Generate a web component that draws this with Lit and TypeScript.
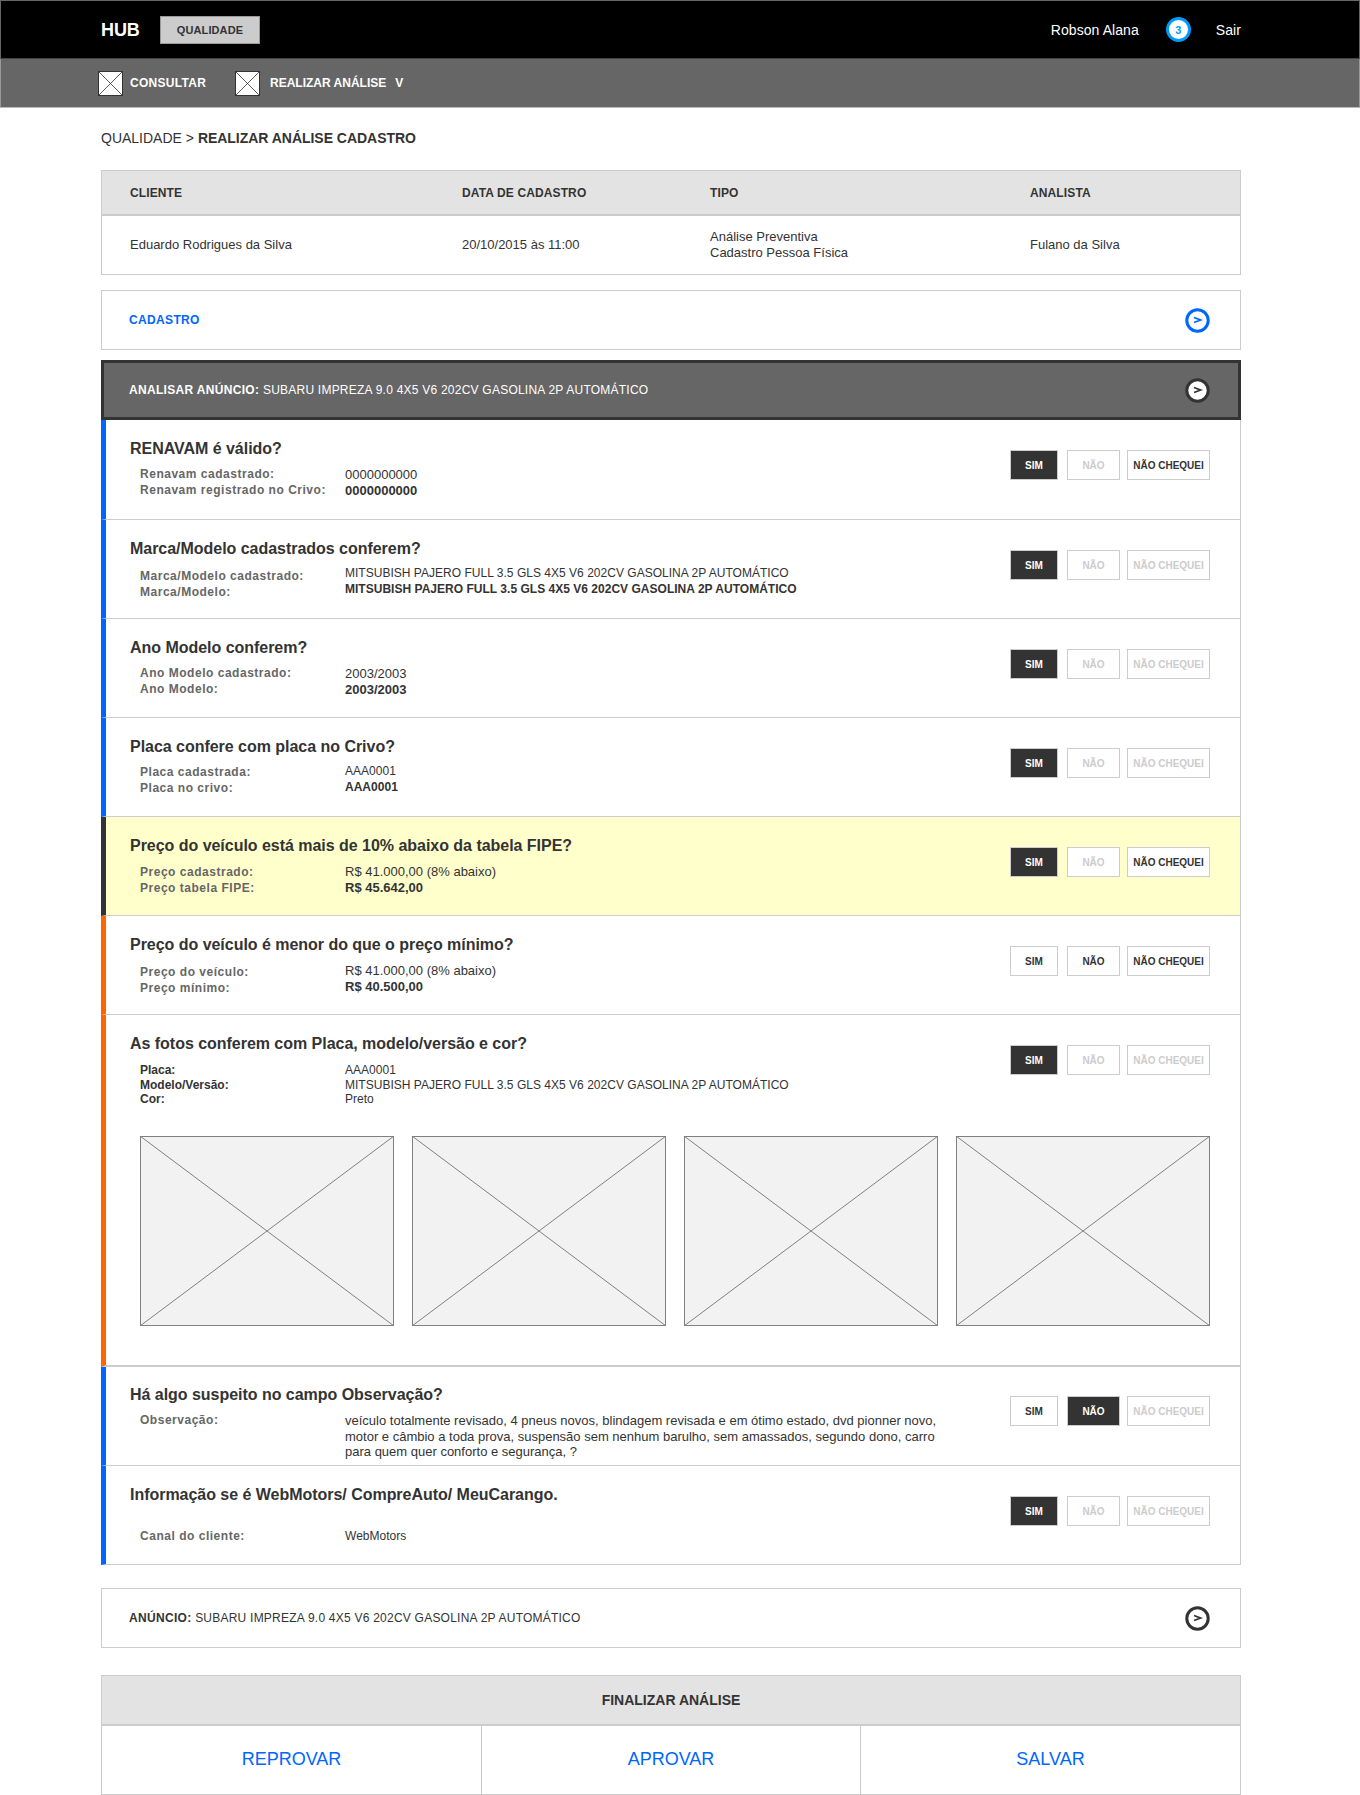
import { LitElement, html, css, svg } from "lit";
import { customElement } from "lit/decorators.js";

type B = "on" | "off" | "norm";
interface Detail { l: string; v: string; strong?: boolean; }
interface Q {
  title: string; bar: string; row?: string; btn: [B, B, B]; details: Detail[]; big?: boolean; photos?: boolean;
}

const PAJERO = "MITSUBISH PAJERO FULL 3.5 GLS 4X5 V6 202CV GASOLINA 2P AUTOMÁTICO";
const OBS = "veículo totalmente revisado, 4 pneus novos, blindagem revisada e em ótimo estado, dvd pionner novo, motor e câmbio a toda prova, suspensão sem nenhum barulho, sem amassados, segundo dono, carro para quem quer conforto e segurança, ?";

const QS: Q[] = [
  { title: "RENAVAM é válido?", bar: "blue", row: "first", big: true, btn: ["on", "off", "norm"], details: [
    { l: "Renavam cadastrado:", v: "0000000000" }, { l: "Renavam registrado no Crivo:", v: "0000000000", strong: true }] },
  { title: "Marca/Modelo cadastrados conferem?", bar: "blue", row: "low", btn: ["on", "off", "off"], details: [
    { l: "Marca/Modelo cadastrado:", v: PAJERO }, { l: "Marca/Modelo:", v: PAJERO, strong: true }] },
  { title: "Ano Modelo conferem?", bar: "blue", big: true, btn: ["on", "off", "off"], details: [
    { l: "Ano Modelo cadastrado:", v: "2003/2003" }, { l: "Ano Modelo:", v: "2003/2003", strong: true }] },
  { title: "Placa confere com placa no Crivo?", bar: "blue", row: "placa", btn: ["on", "off", "off"], details: [
    { l: "Placa cadastrada:", v: "AAA0001" }, { l: "Placa no crivo:", v: "AAA0001", strong: true }] },
  { title: "Preço do veículo está mais de 10% abaixo da tabela FIPE?", bar: "dark", row: "yellow", big: true, btn: ["on", "off", "norm"], details: [
    { l: "Preço cadastrado:", v: "R$ 41.000,00 (8% abaixo)" }, { l: "Preço tabela FIPE:", v: "R$ 45.642,00", strong: true }] },
  { title: "Preço do veículo é menor do que o preço mínimo?", bar: "orange", row: "shift2", big: true, btn: ["norm", "norm", "norm"], details: [
    { l: "Preço do veículo:", v: "R$ 41.000,00 (8% abaixo)" }, { l: "Preço mínimo:", v: "R$ 40.500,00", strong: true }] },
  { title: "As fotos conferem com Placa, modelo/versão e cor?", bar: "orange", row: "fotos", photos: true, btn: ["on", "off", "off"], details: [
    { l: "Placa:", v: "AAA0001" }, { l: "Modelo/Versão:", v: PAJERO }, { l: "Cor:", v: "Preto" }] },
  { title: "Há algo suspeito no campo Observação?", bar: "blue", row: "obs", big: true, btn: ["norm", "on", "off"], details: [
    { l: "Observação:", v: OBS }] },
  { title: "Informação se é WebMotors/ CompreAuto/ MeuCarango.", bar: "blue", row: "canal", btn: ["on", "off", "off"], details: [
    { l: "Canal do cliente:", v: "WebMotors" }] },
];

@customElement("app-root")
export class AppRoot extends LitElement {
  static styles = css`
    :host { display: block; width: 1360px; height: 1795px; overflow: hidden; background: #fff;
      font-family: "Liberation Sans", Arial, sans-serif; color: #333; font-size: 12px; }
    * { box-sizing: border-box; }

    .top { height: 59px; background: #000; border: 1px solid #666; border-bottom-color: #444;
      display: flex; align-items: center; padding: 0 118px 0 100px; color: #fff; }
    .hub { font-size: 18px; font-weight: 700; width: 59px; letter-spacing: -.1px; padding-top: 1px; }
    .tab { width: 100px; height: 28px; background: #ccc; border: 1px solid #999; color: #333; font-size: 11px; font-weight: 700;
      letter-spacing: .1px; display: flex; align-items: center; justify-content: center; }
    .spacer { flex: 1; }
    .user { font-size: 14px; letter-spacing: .07px; }
    .badge { width: 25px; height: 25px; border-radius: 50%; background: #fff; border: 3px solid #0099ff; color: #0099ff; margin: 0 25px 0 27px;
      font-size: 11px; font-weight: 700; display: flex; align-items: center; justify-content: center; }

    .nav { height: 49px; background: #666; border: 1px solid #999; border-top: 0; border-bottom-color: #bbb;
      display: flex; align-items: center; padding-left: 97px; color: #fff; font-weight: 700; font-size: 12px; }
    .nav svg { display: block; width: 25px; height: 25px; flex: none; }
    .nav .consultar { margin-left: 7px; letter-spacing: .3px; width: 105px; }
    .nav .realizar { margin-left: 10px; }
    .nav .v { margin-left: 9px; }

    main { padding: 0 119px 0 101px; }
    .crumb { font-size: 14px; height: 17px; line-height: 17px; margin-top: 22px; }
    .crumb b { font-weight: 700; letter-spacing: -.03px; }

    .table { margin-top: 23px; border: 1px solid #ccc; height: 105px; }
    .thead, .tbody { display: grid; grid-template-columns: 332px 248px 320px 1fr; padding-left: 28px; align-items: center; }
    .thead { height: 45px; background: #e3e3e3; border-bottom: 2px solid #ccc; font-weight: 700; letter-spacing: .12px; }
    .tbody { height: 58px; line-height: 16px; font-size: 13px; }

    .bar { display: flex; align-items: center; justify-content: space-between; height: 60px; padding: 0 30px 0 27px; border: 1px solid #ccc; letter-spacing: .23px; }
    .bar b { font-weight: 700; letter-spacing: .32px; }
    .cad { margin-top: 15px; color: #0066ff; font-weight: 700; letter-spacing: .35px; }
    .ana { margin-top: 10px; background: #666; border: 3px solid #333; color: #fff; padding: 0 28px 0 25px; }
    .anu { margin-top: 23px; }
    .circle { display: block; width: 25px; height: 25px; }

    .q { display: flex; justify-content: space-between; height: 99px; padding: 0 30px 0 24px; border-right: 1px solid #ccc;
      border-bottom: 1px solid #ccc; border-left: 5px solid #0066ff; }
    .q.first { height: 100px; }
    .q.dark { border-left-color: #333; }
    .q.orange { border-left-color: #ff6600; }
    .q.yellow { background: #ffffcc; }
    .q.fotos { height: 352px; border-bottom-width: 2px; flex-wrap: wrap; align-content: flex-start; }
    .body { width: 800px; }
    .title { font-size: 16px; font-weight: 700; line-height: 20px; margin-top: 19px; letter-spacing: -.03px; }
    .details { display: flex; margin: 8px 0 0 10px; line-height: 15.5px; }
    .labels { width: 205px; flex: none; font-weight: 700; color: #666; letter-spacing: .52px; }
    .values { width: 610px; flex: none; letter-spacing: .02px; }
    .values.big { font-size: 13px; letter-spacing: 0; }
    .strong { font-weight: 700; }
    .q.low .details { margin-top: 7px; }
    .q.low .labels { margin-top: 3px; }
    .q.placa .details { margin-top: 7px; }
    .q.placa .labels, .q.yellow .labels { margin-top: 1px; }
    .q.shift2 .labels { margin-top: 2px; }
    .q.fotos .labels { color: #333; letter-spacing: 0; }
    .q.fotos .details { line-height: 14.7px; margin-top: 9px; }
    .q.canal .details { margin-top: 24px; }
    .q.obs .title { margin-top: 18px; }
    .q.obs .btns { margin-top: 29px; }

    .btns { display: flex; margin-top: 30px; height: 30px; }
    .btn { height: 30px; border: 1px solid #ccc; background: #fff; color: #333; font-size: 10px; font-weight: 700;
      display: flex; align-items: center; justify-content: center; }
    .btn.on { background: #333; color: #fff; }
    .btn.off { color: #ccc; }
    .b0 { width: 48px; margin-right: 9px; }
    .b1 { width: 53px; margin-right: 7px; }
    .b2 { width: 83px; }

    .photos { width: 100%; display: grid; grid-template-columns: repeat(4, 254px); gap: 18px; margin: 29px 0 0 10px; }
    .photos svg { display: block; width: 254px; height: 190px; }

    .final { margin-top: 27px; border: 1px solid #ccc; border-bottom: 0; height: 120px; }
    .fhead { height: 50px; background: #e3e3e3; border-bottom: 2px solid #ccc; font-size: 14px; font-weight: 700; display: flex; align-items: center; justify-content: center; }
    .fbtns { display: grid; grid-template-columns: 379px 379px 1fr; height: 69px; border-bottom: 1px solid #ccc; }
    .fbtn { display: flex; align-items: center; justify-content: center; color: #0066ff; font-size: 18px; padding-bottom: 1px; }
    .fbtn + .fbtn { border-left: 1px solid #ccc; }
  `;

  private navIcon() {
    return html`<svg viewBox="0 0 25 25"><rect x=".5" y=".5" width="24" height="24" fill="#fff" stroke="#333"/><path d="M0 0 25 25M25 0 0 25" stroke="#333" stroke-width=".8" fill="none"/></svg>`;
  }

  private circle(ring: string, fill: string, mark: string) {
    return html`<svg class="circle" viewBox="0 0 25 25"><circle cx="12.5" cy="12.5" r="10.7" fill="${fill}" stroke="${ring}" stroke-width="3"/><path d="M9 9.5 15.5 12 9 14.5" fill="none" stroke="${mark}" stroke-width="1.8"/></svg>`;
  }

  private photo() {
    return html`<svg viewBox="0 0 254 190"><rect x=".5" y=".5" width="253" height="189" fill="#f2f2f2" stroke="#808080"/>${svg`<path d="M0 0 254 190M254 0 0 190" stroke="#808080" fill="none"/>`}</svg>`;
  }

  private question(q: Q) {
    const labels = ["SIM", "NÃO", "NÃO CHEQUEI"];
    return html`<div class="q ${q.bar} ${q.row ?? ""}">
      <div class="body">
        <div class="title">${q.title}</div>
        <div class="details">
          <div class="labels">${q.details.map(d => html`<div>${d.l}</div>`)}</div>
          <div class="values ${q.big ? "big" : ""}">${q.details.map(d => html`<div class="${d.strong ? "strong" : ""}">${d.v}</div>`)}</div>
        </div>
      </div>
      <div class="btns">
        ${labels.map((t, i) => html`<div class="btn b${i} ${q.btn[i]}">${t}</div>`)}
      </div>
      ${q.photos ? html`<div class="photos">${[0, 1, 2, 3].map(() => this.photo())}</div>` : ""}
    </div>`;
  }

  render() {
    return html`
      <div class="top">
        <div class="hub">HUB</div>
        <div class="tab">QUALIDADE</div>
        <div class="spacer"></div>
        <div class="user">Robson Alana</div>
        <div class="badge">3</div>
        <div class="user">Sair</div>
      </div>
      <div class="nav">
        ${this.navIcon()}<span class="consultar">CONSULTAR</span>
        ${this.navIcon()}<span class="realizar">REALIZAR ANÁLISE</span><span class="v">V</span>
      </div>
      <main>
        <div class="crumb">QUALIDADE &gt; <b>REALIZAR ANÁLISE CADASTRO</b></div>
        <div class="table">
          <div class="thead"><div>CLIENTE</div><div>DATA DE CADASTRO</div><div>TIPO</div><div>ANALISTA</div></div>
          <div class="tbody"><div>Eduardo Rodrigues da Silva</div><div>20/10/2015 às 11:00</div><div>Análise Preventiva<br>Cadastro Pessoa Física</div><div>Fulano da Silva</div></div>
        </div>
        <div class="bar cad"><span>CADASTRO</span>${this.circle("#0066ff", "#fff", "#0066ff")}</div>
        <div class="bar ana"><span><b>ANALISAR ANÚNCIO:</b> SUBARU IMPREZA 9.0 4X5 V6 202CV GASOLINA 2P AUTOMÁTICO</span>${this.circle("#333", "#fff", "#333")}</div>
        ${QS.map(q => this.question(q))}
        <div class="bar anu"><span><b>ANÚNCIO:</b> SUBARU IMPREZA 9.0 4X5 V6 202CV GASOLINA 2P AUTOMÁTICO</span>${this.circle("#333", "#fff", "#333")}</div>
        <div class="final">
          <div class="fhead">FINALIZAR ANÁLISE</div>
          <div class="fbtns"><div class="fbtn">REPROVAR</div><div class="fbtn">APROVAR</div><div class="fbtn">SALVAR</div></div>
        </div>
      </main>`;
  }
}
